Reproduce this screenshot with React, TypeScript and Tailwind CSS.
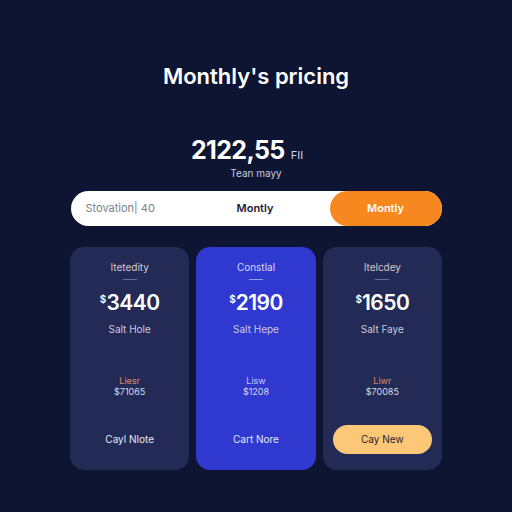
import * as React from 'react'

type Plan = {
  name: string
  price: string
  note: string
  tag: string
  sub: string
  cta: string
  featured?: boolean
  highlight?: boolean
}

const plans: Plan[] = [
  { name: 'Itetedity', price: '3440', note: 'Salt Hole', tag: 'Liesr', sub: '$71065', cta: 'Cayl Nlote' },
  { name: 'Constlal', price: '2190', note: 'Salt Hepe', tag: 'Lisw', sub: '$1208', cta: 'Cart Nore', featured: true },
  { name: 'Itelcdey', price: '1650', note: 'Salt Faye', tag: 'Liwr', sub: '$70085', cta: 'Cay New', highlight: true },
]

function PlanCard({ plan }: { plan: Plan }) {
  return (
    <div
      className={
        'flex h-[223px] flex-col items-center rounded-[14px] pt-[14px] ' +
        (plan.featured ? 'bg-[#2f38cf]' : 'bg-[#222a55]')
      }
    >
      <div className={'text-[10px] leading-[12px] ' + (plan.featured ? 'text-[#d6dafa]' : 'text-[#d9c8d0]')}>
        {plan.name}
      </div>
      <div className={'mt-[6px] h-px w-[14px] ' + (plan.featured ? 'bg-[#8f97f0]' : 'bg-[#6a7099]')} />
      <div className="mt-[10px] flex items-start font-semibold text-white">
        <span className="mt-[2px] text-[10px]">$</span>
        <span className="text-[21px] leading-[26px] tracking-tight">{plan.price}</span>
      </div>
      <div className="mt-[7px] text-[10px] leading-[12px] text-[#c8cbe2]">{plan.note}</div>
      <div className="mt-[40px] flex flex-col items-center leading-[11px]">
        <span className={'text-[9px] ' + (plan.featured ? 'text-[#c9cdf5]' : 'text-[#e0876a]')}>{plan.tag}</span>
        <span className="text-[9px] text-[#d8dbea]">{plan.sub}</span>
      </div>
      <div className="mt-auto mb-[16px] flex w-full justify-center px-[10px]">
        {plan.highlight ? (
          <div className="flex h-[29px] w-full items-center justify-center rounded-full bg-[#fcc878] text-[10px] text-[#2a2230]">
            {plan.cta}
          </div>
        ) : (
          <div className="flex h-[29px] items-center text-[10px] text-[#e6e8f4]">{plan.cta}</div>
        )}
      </div>
    </div>
  )
}

export default function App() {
  return (
    <div
      className="flex h-[512px] w-[512px] flex-col items-center bg-[#0e1533] text-white"
      style={{ fontFamily: 'Inter, "Noto Sans", sans-serif' }}
    >
      <h1 className="mt-[62px] text-[22px] font-semibold leading-[28px]">Monthly's pricing</h1>

      <div className="mt-[45px] mr-[18px] flex items-baseline gap-[6px]">
        <span className="text-[25px] font-bold leading-[30px] tracking-tight">2122,55</span>
        <span className="text-[11px] text-[#d0d3e4]">FII</span>
      </div>
      <div className="mt-[2px] text-[10px] leading-[12px] text-[#c9ccdd]">Tean mayy</div>

      <div className="mt-[12px] flex h-[35px] w-[371px] items-center rounded-full bg-white">
        <div className="w-[110px] pl-[15px] text-[11px] text-[#7b7f8c]">Stovation| 40</div>
        <div className="flex-1 text-center text-[11px] font-semibold text-[#1c2033]">Montly</div>
        <div className="flex h-full w-[112px] items-center justify-center rounded-full bg-[#f7881f] text-[11px] font-semibold text-white">
          Montly
        </div>
      </div>

      <div className="mt-[21px] grid w-[372px] grid-cols-3 gap-[7px]">
        {plans.map((p) => (
          <PlanCard key={p.price} plan={p} />
        ))}
      </div>
    </div>
  )
}
